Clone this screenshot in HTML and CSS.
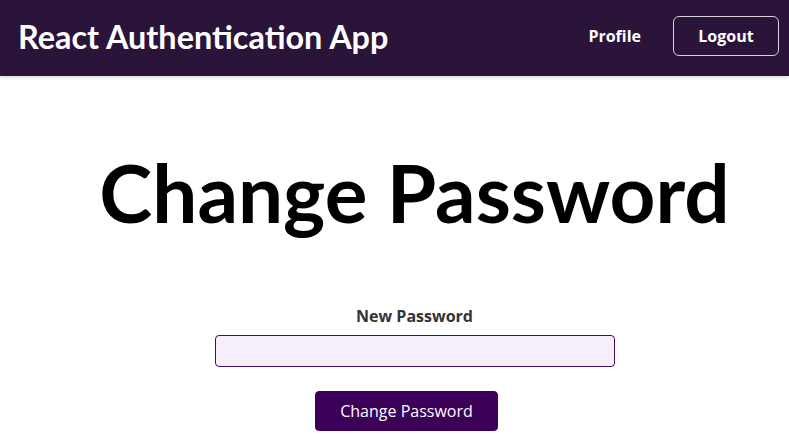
FILE: index.html
```html
<!DOCTYPE html>
<html lang="en">
<head>
<meta charset="utf-8">
<title>React Authentication App</title>
<link rel="stylesheet" href="styles.css">
</head>
<body>
<header class="header">
  <div class="logo">React Authentication App</div>
  <nav class="nav">
    <a class="nav-link" href="#">Profile</a>
    <button class="logout" type="button">Logout</button>
  </nav>
</header>
<main class="main">
  <h1 class="title">Change Password</h1>
  <form class="form">
    <div class="control">
      <label for="new-password">New Password</label>
      <input id="new-password" type="password">
    </div>
    <div class="action">
      <button type="button">Change Password</button>
    </div>
  </form>
</main>
</body>
</html>
```
FILE: styles.css
```css
* { box-sizing: border-box; }
html, body { margin: 0; padding: 0; }
body {
  font-family: "Open Sans", "Noto Sans", sans-serif;
  font-size: 16px;
  background: #ffffff;
  overflow: hidden;
}
.header {
  height: 76px;
  background-color: #2b1439;
  display: flex;
  justify-content: space-between;
  align-items: center;
  padding: 0 10px 4px 18px;
  box-shadow: 0 1px 4px rgba(0, 0, 0, 0.2);
}
.logo {
  font-family: "Lato", sans-serif;
  font-weight: bold;
  font-size: 32.4px;
  color: #ffffff;
}
.nav {
  display: flex;
  align-items: center;
  gap: 32px;
}
.nav-link {
  color: #ffffff;
  font-weight: bold;
  text-decoration: none;
}
.logout {
  font: inherit;
  font-weight: bold;
  color: #ffffff;
  background: transparent;
  border: 1px solid #d8d0dc;
  border-radius: 6px;
  width: 106px;
  height: 40px;
  padding: 0;
}
.main {
  padding-left: 40px;
  text-align: center;
}
.title {
  font-family: "Lato", sans-serif;
  font-weight: bold;
  font-size: 80px;
  margin: 68px 0 0 0;
  line-height: 1.2;
  color: #000;
}
.form {
  width: 400px;
  margin: 65px auto 0;
}
.control label {
  display: block;
  font-weight: bold;
  color: #353336;
  margin-bottom: 8px;
}
.control input {
  display: block;
  width: 100%;
  height: 32px;
  border: 1px solid #430a66;
  border-radius: 4px;
  background-color: #f6eefa;
  font: inherit;
}
.action {
  margin-top: 24px;
  display: flex;
  justify-content: center;
}
.action button {
  font: inherit;
  width: 183px;
  height: 40px;
  margin-right: 16px;
  border-radius: 4px;
  border: 1px solid #3d0059;
  background-color: #3d0059;
  color: #ffffff;
}
```
